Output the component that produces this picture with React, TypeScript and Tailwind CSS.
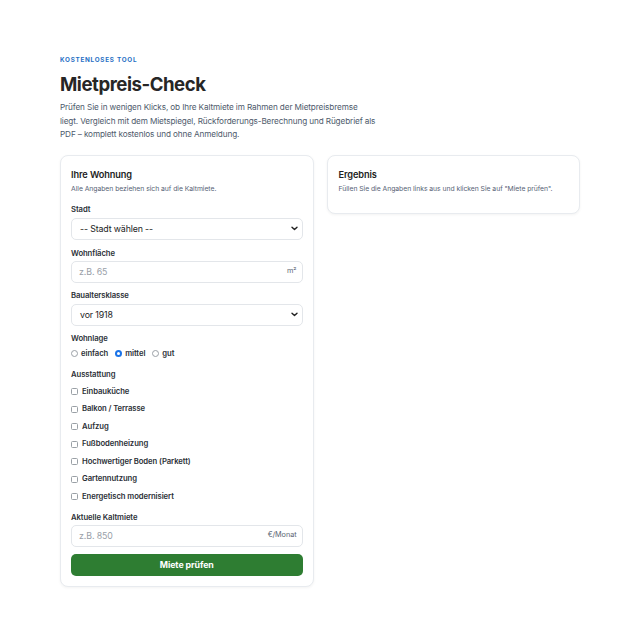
import React from "react";

function Chevron() {
  return (
    <svg width="7" height="5" viewBox="0 0 7 5" className="shrink-0">
      <path d="M1 1.2 L3.5 3.6 L6 1.2" fill="none" stroke="#222" strokeWidth="1.4" strokeLinecap="round" strokeLinejoin="round" />
    </svg>
  );
}

function Label({ children, className = "" }: { children: React.ReactNode; className?: string }) {
  return <div className={`pt-[1px] text-[7.7px] leading-[10px] font-semibold tracking-[-0.01em] text-[#2b2f36] ${className}`}>{children}</div>;
}

function SelectBox({ text }: { text: string }) {
  return (
    <div className="mt-[3px] h-[22px] rounded-[5px] border border-[#e3e6ea] bg-white flex items-center justify-between pl-[8px] pr-[4px]">
      <span className="text-[8.8px] tracking-[-0.015em] text-[#222]">{text}</span>
      <Chevron />
    </div>
  );
}

function InputBox({ placeholder, unit, className = "mt-[2px]" }: { placeholder: string; unit: string; className?: string }) {
  return (
    <div className={`${className} h-[22px] rounded-[5px] border border-[#e3e6ea] bg-white flex items-center justify-between pl-[7px] pr-[5px]`}>
      <span className="text-[8.8px] tracking-[-0.01em] text-[#9aa0a8]">{placeholder}</span>
      <span className="text-[7.3px] tracking-[-0.01em] text-[#5b6473]">{unit}</span>
    </div>
  );
}

function Radio({ checked, label }: { checked?: boolean; label: string }) {
  return (
    <div className="flex items-center gap-[3px]">
      {checked ? (
        <span className="w-[7px] h-[7px] rounded-full bg-[#1a73e8] flex items-center justify-center">
          <span className="w-[3px] h-[3px] rounded-full bg-white" />
        </span>
      ) : (
        <span className="w-[7px] h-[7px] rounded-full border border-[#9aa0a6] bg-white" />
      )}
      <span className="text-[7.7px] font-semibold tracking-[-0.01em] text-[#2b2f36]">{label}</span>
    </div>
  );
}

function Check({ label }: { label: string }) {
  return (
    <div className="h-[17.5px] flex items-center gap-[4px]">
      <span className="w-[7px] h-[7px] rounded-[1.5px] border border-[#9aa0a6] bg-white" />
      <span className="text-[7.7px] font-semibold tracking-[-0.01em] text-[#2b2f36]">{label}</span>
    </div>
  );
}

export default function App() {
  const items = [
    "Einbauküche",
    "Balkon / Terrasse",
    "Aufzug",
    "Fußbodenheizung",
    "Hochwertiger Boden (Parkett)",
    "Gartennutzung",
    "Energetisch modernisiert",
  ];
  return (
    <div className="min-h-[640px] bg-white pt-[56px]" style={{ fontFamily: "Inter, 'Noto Sans', sans-serif" }}>
      <div className="w-[520px] ml-[60px]">
        <div className="text-[6.3px] leading-[8px] font-bold tracking-[0.12em] text-[#1f6fc4]">KOSTENLOSES TOOL</div>
        <h1 className="mt-[8px] text-[18.6px] leading-[24px] font-bold tracking-[-0.025em] text-[#262626]">Mietpreis-Check</h1>
        <p className="mt-[5px] w-[317px] text-[8.2px] leading-[13.5px] tracking-[-0.015em] text-[#4e5a6b]">
          Prüfen Sie in wenigen Klicks, ob Ihre Kaltmiete im Rahmen der Mietpreisbremse liegt. Vergleich mit dem Mietspiegel, Rückforderungs-Berechnung und Rügebrief als PDF – komplett kostenlos und ohne Anmeldung.
        </p>

        <div className="mt-[13px] grid grid-cols-2 gap-[13px] items-start">
          <div className="rounded-[8px] border border-[#e8ebef] bg-white shadow-[0_1px_3px_rgba(0,0,0,0.05)] px-[10px] pt-[13px] pb-[10px]">
            <div className="text-[9.2px] leading-[12px] font-semibold tracking-[-0.01em] text-[#222]">Ihre Wohnung</div>
            <div className="mt-[3px] text-[6.8px] leading-[10px] tracking-[-0.005em] text-[#566275]">Alle Angaben beziehen sich auf die Kaltmiete.</div>

            <Label className="mt-[10px]">Stadt</Label>
            <SelectBox text="-- Stadt wählen --" />

            <Label className="mt-[8px]">Wohnfläche</Label>
            <InputBox placeholder="z.B. 65" unit="m²" />

            <Label className="mt-[7px]">Baualtersklasse</Label>
            <SelectBox text="vor 1918" />

            <Label className="mt-[7px]">Wohnlage</Label>
            <div className="mt-[5px] h-[10px] flex items-center gap-[7px]">
              <Radio label="einfach" />
              <Radio checked label="mittel" />
              <Radio label="gut" />
            </div>

            <Label className="mt-[10px]">Ausstattung</Label>
            <div className="mt-[3.5px] flex flex-col">
              {items.map((t) => (
                <Check key={t} label={t} />
              ))}
            </div>

            <Label className="mt-[6px]">Aktuelle Kaltmiete</Label>
            <InputBox placeholder="z.B. 850" unit="€/Monat" className="mt-[2px]" />

            <button className="mt-[7px] w-full h-[22px] rounded-[5px] bg-[#2e7d32] text-white text-[8.8px] font-bold tracking-[-0.01em] flex items-center justify-center">
              Miete prüfen
            </button>
          </div>

          <div className="rounded-[8px] border border-[#e8ebef] bg-white shadow-[0_1px_3px_rgba(0,0,0,0.05)] px-[11px] pt-[13px] pb-[19px]">
            <div className="text-[9.2px] leading-[12px] font-semibold tracking-[-0.01em] text-[#222]">Ergebnis</div>
            <div className="mt-[3px] text-[6.8px] leading-[10px] tracking-[-0.005em] text-[#566275]">Füllen Sie die Angaben links aus und klicken Sie auf "Miete prüfen".</div>
          </div>
        </div>
      </div>
    </div>
  );
}
